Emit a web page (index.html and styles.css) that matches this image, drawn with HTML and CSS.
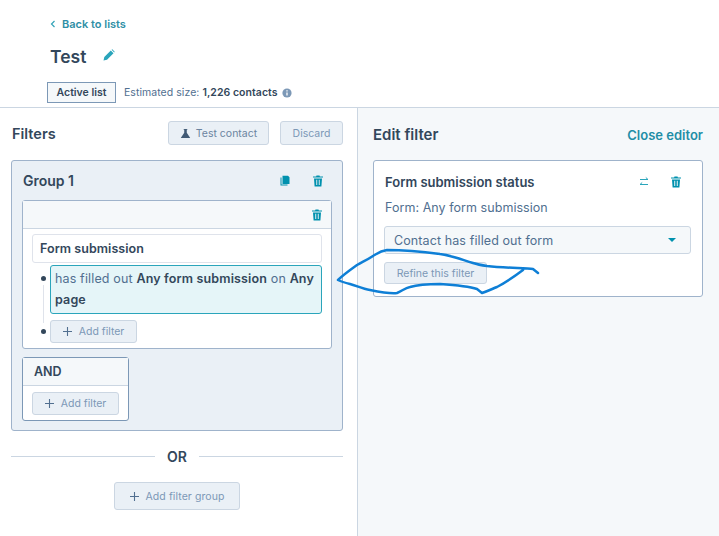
FILE: index.html
```html
<!DOCTYPE html>
<html lang="en">
<head>
<meta charset="utf-8">
<title>Test</title>
<link rel="stylesheet" href="styles.css">
</head>
<body>
<div class="page">
  <header class="top">
    <a class="back"><svg class="chev" viewBox="0 0 6 8"><path d="M4.500 1 1.500 4l3 3" fill="none" stroke="#33a3b8" stroke-width="1.200"/></svg>Back to lists</a>
    <div class="title-row">
      <h1>Test</h1>
      <svg class="pencil" viewBox="0 0 12 12"><path d="M0.500 11.500 1.300 8 7.800 1.500 10.500 4.200 4 10.700Z M8.600 0.800 9.300 0.300 11.700 2.700 11.200 3.400Z" fill="#2aa5bb"/></svg>
    </div>
    <div class="meta">
      <span class="tag">Active list</span>
      <span class="size">Estimated size: <b>1,226 contacts</b></span>
      <svg class="info" viewBox="0 0 10 10"><circle cx="5" cy="5" r="4.600" fill="#7c98b6"/><path d="M5 4.400v3M5 2.200v1.200" stroke="#fff" stroke-width="1.300"/></svg>
    </div>
  </header>
  <main class="split">
    <section class="left">
      <div class="bar">
        <h2>Filters</h2>
        <div class="bar-btns">
          <span class="btn btn-test"><svg class="flask" viewBox="0 0 12 12"><path d="M4 1h4v1H7.400v3.200L11 10.500V11H1v-.5L4.600 5.200V2H4Z" fill="#425b76"/></svg>Test contact</span>
          <span class="btn btn-discard">Discard</span>
        </div>
      </div>
      <div class="group">
        <div class="group-head">
          <h3>Group 1</h3>
          <div class="group-icons">
            <svg class="ico" viewBox="0 0 12 12"><path d="M1.500 2.500h1v7h6v1h-7Z M3.500 .8h5.500l1.500 1.500V9H3.500Z" fill="#0091ae"/></svg>
            <svg class="ico" viewBox="0 0 12 12"><use href="#trash"/></svg>
          </div>
        </div>
        <div class="card">
          <div class="card-top"><svg class="ico" viewBox="0 0 12 12"><use href="#trash"/></svg></div>
          <div class="card-body">
            <div class="source">Form submission</div>
            <div class="tree">
              <div class="tree-row">
                <i class="dot"></i>
                <div class="rule">has filled out <b>Any form submission</b> on <b>Any page</b></div>
              </div>
              <div class="tree-row tree-last">
                <i class="dot"></i>
                <span class="btn btn-add"><svg class="plus" viewBox="0 0 10 10"><path d="M5 0v10M0 5h10" stroke="#516f90" stroke-width="1.200"/></svg>Add filter</span>
              </div>
            </div>
          </div>
        </div>
        <div class="and">
          <div class="and-head">AND</div>
          <div class="and-body"><span class="btn btn-add"><svg class="plus" viewBox="0 0 10 10"><path d="M5 0v10M0 5h10" stroke="#516f90" stroke-width="1.200"/></svg>Add filter</span></div>
        </div>
      </div>
      <div class="or"><span>OR</span></div>
      <div class="add-group"><span class="btn btn-group"><svg class="plus" viewBox="0 0 10 10"><path d="M5 0v10M0 5h10" stroke="#516f90" stroke-width="1.200"/></svg>Add filter group</span></div>
    </section>
    <aside class="right">
      <div class="edit-head">
        <h2>Edit filter</h2>
        <a class="close">Close editor</a>
      </div>
      <div class="edit-card">
        <div class="edit-title">
          <h4>Form submission status</h4>
          <div class="edit-icons">
            <svg class="ico swap" viewBox="0 0 12 12"><path d="M2 3.500h8M7.800 1.500l2.200 2M10 8.500H2M4.200 6.500l-2.200 2" fill="none" stroke="#2aa5bb" stroke-width="1"/></svg>
            <svg class="ico" viewBox="0 0 12 12"><use href="#trash"/></svg>
          </div>
        </div>
        <p class="form-line">Form: Any form submission</p>
        <div class="select"><span>Contact has filled out form</span><i class="caret"></i></div>
        <span class="btn btn-refine">Refine this filter</span>
      </div>
    </aside>
  </main>
  <svg class="scribble" viewBox="0 0 719 536">
    <path d="M538 273 533 269C525 268 505 268 487 266 480 265 476 264 473 263 460 259 450 255 440 254 425 252 405 250 387 250 380 251 378 253 373 256 367 260 362 262 357 265 350 270 343 275 338 280 342 282 346 283 350 284 357 286 363 289 370 290 380 292 390 294 397 293 402 291 405 288 410 287 420 284 430 284 440 284 455 285 468 286 477 289L482 293C488 291 492 289 497 287 505 283 515 276 523 270"/>
  </svg>
</div>
<svg class="defs" width="0" height="0"><defs><g id="trash"><path d="M4.500 .6h3l.4.9H11v1.100H1V1.500h3.100ZM2 3.400h8l-.6 8H2.600ZM4.300 4.800v5.200h.9V4.800ZM6.800 4.800v5.200h.9V4.800Z" fill="#0091ae" fill-rule="evenodd"/></g></defs></svg>
</body>
</html>
```
FILE: styles.css
```css
* { box-sizing: border-box; }
html, body { margin: 0; padding: 0; }
body {
  font-family: Inter, "Noto Sans", "Liberation Sans", sans-serif;
  color: #33475b;
  background: #fff;
  font-size: 12px;
  letter-spacing: 0;
}
.page { position: relative; width: 719px; height: 536px; overflow: hidden; display: flex; flex-direction: column; }
.defs { position: absolute; }
h1, h2, h3, h4, p { margin: 0; }

.top { height: 108px; padding: 16px 0 0 47px; border-bottom: 1px solid #cbd6e2; flex: none; }
.back { display: flex; align-items: center; height: 16px; padding-left: 3px; color: #2f8fa6; font-size: 11px; font-weight: 600; }
.chev { width: 6px; height: 8px; margin-right: 6px; }
.title-row { display: flex; align-items: center; height: 24px; margin-top: 12px; padding-left: 3px; }
h1 { font-size: 17.500px; font-weight: 600; width: 53px; }
.pencil { width: 12px; height: 12px; margin-top: -3px; }
.meta { display: flex; align-items: center; margin-top: 14px; }
.tag { width: 69px; height: 21px; border: 1px solid #7c98b6; background: #f5f8fa; font-size: 10.500px; font-weight: 600; display: flex; align-items: center; justify-content: center; }
.size { margin-left: 8px; font-size: 10.500px; color: #516f90; letter-spacing: 0.05px; }
.size b { color: #33475b; font-weight: 600; }
.info { width: 10px; height: 10px; margin-left: 4px; }

.split { flex: 1; display: flex; min-height: 0; }
.left { width: 358px; padding: 13px 14px 0 11px; border-right: 1px solid #cbd6e2; flex: none; }
.right { flex: 1; background: #f5f8fa; padding: 18px 16px 0 15px; }

.bar { display: flex; justify-content: space-between; align-items: center; height: 24px; margin-bottom: 15px; padding-left: 1px; }
h2 { font-size: 15px; font-weight: 600; color: #33475b; }
.bar h2 { font-size: 14.500px; }
.bar-btns { display: flex; gap: 11px; }
.btn { display: inline-flex; align-items: center; justify-content: center; background: #eaf0f6; border: 1px solid #cbd6e2; border-radius: 3px; color: #7c98b6; font-size: 10.500px; }
.btn-test { width: 101px; height: 24px; color: #6b84a0; }
.btn-discard { width: 63px; height: 24px; }
.flask { width: 11px; height: 11px; margin-right: 5px; }
.plus { width: 9px; height: 9px; margin-right: 7px; flex: none; }

.group { width: 332px; height: 271px; background: #eaf0f6; border: 1px solid #9fb3cb; border-radius: 3px; padding: 0 10px; }
.group-head { display: flex; justify-content: space-between; align-items: center; height: 39px; padding-left: 1px; }
h3 { font-size: 14px; font-weight: 600; }
.group-icons { display: flex; gap: 21px; padding-right: 8px; }
.ico { width: 12px; height: 12px; display: block; }

.card { background: #fff; border: 1px solid #9fb3cb; border-radius: 3px; height: 149px; }
.card-top { height: 28px; background: #f5f8fa; border-bottom: 1px solid #cbd6e2; display: flex; align-items: center; justify-content: flex-end; padding-right: 8px; }
.card-body { padding: 5px 9px 0; }
.source { height: 29px; border: 1px solid #dfe3eb; border-radius: 3px; font-weight: 600; font-size: 12.500px; letter-spacing: 0.05px; display: flex; align-items: center; padding-left: 7px; }
.tree { position: relative; margin-top: 2px; }
.tree::before { content: ""; position: absolute; left: 11px; top: 20px; height: 38px; border-left: 1px solid #dfe3eb; }
.tree-row { display: flex; align-items: flex-start; padding-left: 9px; }
.tree-last { margin-top: 6px; align-items: center; }
.dot { width: 5px; height: 5px; border-radius: 50%; background: #33475b; margin: 11px 4px 0 0; flex: none; }
.tree-last .dot { margin-top: 0; }
.rule { flex: 1; height: 49px; background: #e5f5f8; border: 1px solid #2aa5bb; border-radius: 3px; padding: 3px 4px 0; line-height: 20.500px; font-size: 12.500px; letter-spacing: 0.15px; color: #516f90; }
.rule b { color: #33475b; font-weight: 600; }
.btn-add { width: 87px; height: 23px; }

.and { width: 107px; height: 64px; margin-top: 8px; background: #fff; border: 1px solid #7c98b6; border-radius: 3px; }
.and-head { height: 28px; background: #f5f8fa; border-bottom: 1px solid #cbd6e2; padding-left: 11px; font-weight: 600; font-size: 12.500px; display: flex; align-items: center; }
.and-body { padding: 6px 9px; }

.or { display: flex; align-items: center; gap: 12px; margin-top: 17px; height: 16px; font-size: 14px; font-weight: 600; }
.or::before, .or::after { content: ""; flex: 1; border-top: 1px solid #cbd6e2; }
.add-group { display: flex; justify-content: center; margin-top: 18px; }
.btn-group { width: 126px; height: 28px; letter-spacing: 0.08px; }

.edit-head { display: flex; justify-content: space-between; align-items: center; height: 17px; }
.close { font-size: 13px; font-weight: 600; color: #1f8ea6; }
.edit-card { margin-top: 17px; background: #fff; border: 1px solid #9fb3cb; border-radius: 3px; height: 137px; padding: 11px 11px 0; }
.edit-title { display: flex; justify-content: space-between; align-items: center; height: 20px; }
h4 { font-size: 13px; font-weight: 600; }
.edit-icons { display: flex; gap: 20px; padding-right: 9px; }
.form-line { margin-top: 7px; font-size: 12.500px; letter-spacing: 0.05px; color: #516f90; line-height: 18px; }
.select { margin: 9px 0 0 -1px; height: 28px; border: 1px solid #cbd6e2; border-radius: 3px; background: #f5f8fa; display: flex; justify-content: space-between; align-items: center; padding: 0 14px 0 9px; font-size: 12.500px; letter-spacing: 0.1px; color: #516f90; }
.caret { width: 0; height: 0; border-left: 4px solid transparent; border-right: 4px solid transparent; border-top: 4px solid #0091ae; }
.btn-refine { width: 103px; height: 22px; margin: 8px 0 0 -1px; color: #7c98b6; }

.scribble { position: absolute; left: 0; top: 0; width: 719px; height: 536px; pointer-events: none; }
.scribble path { fill: none; stroke: #0e7fd6; stroke-width: 2.500; stroke-linejoin: round; stroke-linecap: round; }
```
